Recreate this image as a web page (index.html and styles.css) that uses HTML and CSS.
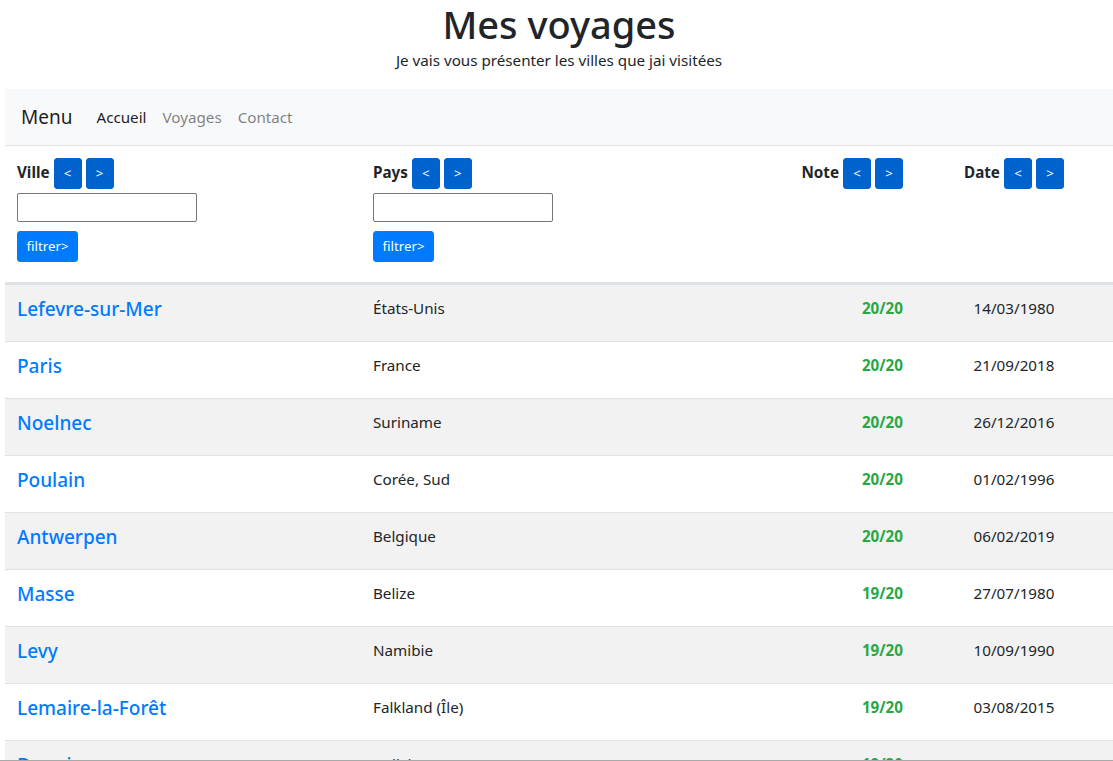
FILE: index.html
```html
<!DOCTYPE html>
<html lang="fr">
<head>
<meta charset="utf-8">
<title>Mes voyages</title>
<link rel="stylesheet" href="styles.css">
</head>
<body>
<div class="page">
  <header class="intro">
    <h1 class="title">Mes voyages</h1>
    <p class="lead">Je vais vous présenter les villes que jai visitées</p>
  </header>
  <nav class="navbar">
    <span class="brand">Menu</span>
    <ul class="nav">
      <li><a class="nav-link active" href="#">Accueil</a></li>
      <li><a class="nav-link" href="#">Voyages</a></li>
      <li><a class="nav-link" href="#">Contact</a></li>
    </ul>
  </nav>
  <table class="trips">
    <colgroup>
      <col class="c-city"><col class="c-country"><col class="c-note"><col class="c-date">
    </colgroup>
    <thead>
      <tr>
        <th>
          <div class="sort"><span class="sort-label">Ville</span><button class="btn-arrow">&lt;</button><button class="btn-arrow">&gt;</button></div>
          <input class="filter-input" type="text">
          <button class="btn-filter">filtrer&gt;</button>
        </th>
        <th>
          <div class="sort"><span class="sort-label">Pays</span><button class="btn-arrow">&lt;</button><button class="btn-arrow">&gt;</button></div>
          <input class="filter-input" type="text">
          <button class="btn-filter">filtrer&gt;</button>
        </th>
        <th>
          <div class="sort sort-end"><span class="sort-label">Note</span><button class="btn-arrow">&lt;</button><button class="btn-arrow">&gt;</button></div>
        </th>
        <th>
          <div class="sort sort-center"><span class="sort-label">Date</span><button class="btn-arrow">&lt;</button><button class="btn-arrow">&gt;</button></div>
        </th>
      </tr>
    </thead>
    <tbody>
      <tr><td><h5 class="city"><a href="#">Lefevre-sur-Mer</a></h5></td><td>États-Unis</td><td class="note">20/20</td><td class="date">14/03/1980</td></tr>
      <tr><td><h5 class="city"><a href="#">Paris</a></h5></td><td>France</td><td class="note">20/20</td><td class="date">21/09/2018</td></tr>
      <tr><td><h5 class="city"><a href="#">Noelnec</a></h5></td><td>Suriname</td><td class="note">20/20</td><td class="date">26/12/2016</td></tr>
      <tr><td><h5 class="city"><a href="#">Poulain</a></h5></td><td>Corée, Sud</td><td class="note">20/20</td><td class="date">01/02/1996</td></tr>
      <tr><td><h5 class="city"><a href="#">Antwerpen</a></h5></td><td>Belgique</td><td class="note">20/20</td><td class="date">06/02/2019</td></tr>
      <tr><td><h5 class="city"><a href="#">Masse</a></h5></td><td>Belize</td><td class="note">19/20</td><td class="date">27/07/1980</td></tr>
      <tr><td><h5 class="city"><a href="#">Levy</a></h5></td><td>Namibie</td><td class="note">19/20</td><td class="date">10/09/1990</td></tr>
      <tr><td><h5 class="city"><a href="#">Lemaire-la-Forêt</a></h5></td><td>Falkland (Île)</td><td class="note">19/20</td><td class="date">03/08/2015</td></tr>
      <tr><td><h5 class="city"><a href="#">Dupuis</a></h5></td><td>Bolivie</td><td class="note">19/20</td><td class="date">14/07/1996</td></tr>
    </tbody>
  </table>
</div>
<div class="bottom-edge"></div>
</body>
</html>
```
FILE: styles.css
```css
* { box-sizing: border-box; }
html, body {
  margin: 0;
  padding: 0;
  background: #fff;
}
body {
  font-family: "Noto Sans", "Open Sans", "Liberation Sans", sans-serif;
  font-size: 15.2px;
  line-height: 24px;
  color: #212529;
  overflow: hidden;
}
.page {
  padding-left: 5px;
  width: 1113px;
}
.intro {
  text-align: center;
}
.title {
  margin: 0;
  font-size: 38px;
  font-weight: 500;
  line-height: 48px;
}
.lead {
  margin: 0 0 17px;
  line-height: 24px;
}
.navbar {
  display: flex;
  align-items: center;
  height: 56px;
  padding: 8px 16px;
  background: #f8f9fa;
}
.brand {
  font-size: 19px;
  line-height: 30px;
  margin-right: 16px;
  color: rgba(0,0,0,.9);
}
.nav {
  display: flex;
  list-style: none;
  margin: 0;
  padding: 0;
}
.nav-link {
  display: block;
  padding: 8px;
  text-decoration: none;
  color: rgba(0,0,0,.5);
}
.nav-link.active { color: rgba(0,0,0,.9); }

.trips {
  width: 1108px;
  table-layout: fixed;
  border-collapse: separate;
  border-spacing: 0;
}
.c-city { width: 356px; }
.c-country { width: 356px; }
.c-note { width: 198px; }
.c-date { width: 198px; }

.trips th {
  vertical-align: top;
  text-align: left;
  padding: 12px 12px 20px;
  border-top: 1px solid #dee2e6;
  border-bottom: 2px solid #dee2e6;
}
.sort {
  display: flex;
  align-items: baseline;
  gap: 4px;
}
.sort-end { justify-content: flex-end; }
.sort-center { justify-content: center; }
.sort-label {
  font-weight: 700;
  line-height: 24px;
}
.btn-arrow {
  width: 28px;
  padding: 4px 0;
  border: 1px solid #0062cc;
  border-radius: 3px;
  background: #0062cc;
  color: #fff;
  font-family: inherit;
  font-size: 13.3px;
  line-height: 21px;
}
.filter-input {
  display: block;
  margin-top: 4px;
  width: 180px;
  height: 29px;
  border: 1px solid #767676;
  border-radius: 2px;
  padding: 1px 2px;
  font: inherit;
}
.btn-filter {
  display: block;
  margin-top: 9px;
  width: 61px;
  height: 31px;
  padding: 0;
  border: 1px solid #007bff;
  border-radius: 3px;
  background: #007bff;
  color: #fff;
  font-family: inherit;
  font-size: 13.3px;
  line-height: 21px;
}
.trips td {
  vertical-align: top;
  padding: 12px;
  border-top: 1px solid #dee2e6;
  line-height: 22px;
}
.trips tbody tr:nth-child(odd) td { background: #f2f2f2; }
.city {
  margin: 0 0 8px;
  font-size: 19px;
  font-weight: 500;
  line-height: 24px;
}
.city a {
  color: #007bff;
  text-decoration: none;
}
.note {
  text-align: right;
  color: #28a745;
  font-weight: 700;
}
.date {
  text-align: center;
}
.bottom-edge {
  position: fixed;
  left: 0;
  right: 0;
  bottom: 0;
  height: 1px;
  background: #a9a9a9;
}
```
